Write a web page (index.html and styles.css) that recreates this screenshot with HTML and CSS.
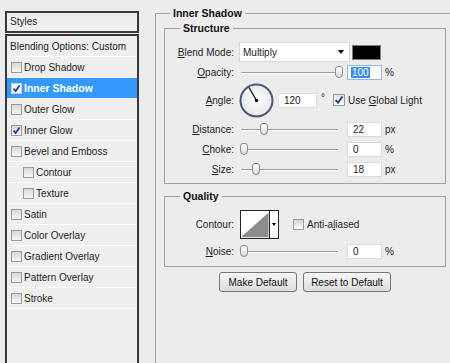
FILE: index.html
```html
<!DOCTYPE html>
<html lang="en">
<head>
<meta charset="UTF-8">
<title>Layer Style</title>
<link rel="stylesheet" href="styles.css">
</head>
<body>
<div class="dialog">
	<div class="styles-col">
		<div class="styles-head">Styles</div>
		<ul class="styles-list">
			<li class="row plain">Blending Options: Custom</li>
			<li class="row"><span class="check"></span>Drop Shadow</li>
			<li class="row selected"><span class="check on"><svg viewBox="0 0 9 9"><path d="M1.5 4.5 L3.6 7 L7.6 1.4"/></svg></span>Inner Shadow</li>
			<li class="row"><span class="check"></span>Outer Glow</li>
			<li class="row"><span class="check on"><svg viewBox="0 0 9 9"><path d="M1.5 4.5 L3.6 7 L7.6 1.4"/></svg></span>Inner Glow</li>
			<li class="row"><span class="check"></span>Bevel and Emboss</li>
			<li class="row sub"><span class="check"></span>Contour</li>
			<li class="row sub"><span class="check"></span>Texture</li>
			<li class="row"><span class="check"></span>Satin</li>
			<li class="row"><span class="check"></span>Color Overlay</li>
			<li class="row"><span class="check"></span>Gradient Overlay</li>
			<li class="row"><span class="check"></span>Pattern Overlay</li>
			<li class="row"><span class="check"></span>Stroke</li>
		</ul>
	</div>

	<fieldset class="effect">
		<legend>Inner Shadow</legend>

		<fieldset class="group structure">
			<legend>Structure</legend>
			<div class="field f-blend">
				<label class="lbl"><u>B</u>lend Mode:</label>
				<div class="select">Multiply<span class="arrow"></span></div>
				<span class="swatch"></span>
			</div>
			<div class="field f-opacity">
				<label class="lbl"><u>O</u>pacity:</label>
				<div class="slider"><span class="thumb" style="left:96px"></span></div>
				<span class="num focus"><span class="sel">100</span></span>
				<span class="unit">%</span>
			</div>
			<div class="field f-angle">
				<label class="lbl"><u>A</u>ngle:</label>
				<svg class="dial" width="35" height="35" viewBox="0 0 35 35">
					<defs>
						<radialGradient id="dialfill" cx="50%" cy="45%" r="55%">
							<stop offset="0" stop-color="#ffffff"/>
							<stop offset="1" stop-color="#e6e6e6"/>
						</radialGradient>
					</defs>
					<circle cx="17.5" cy="17.5" r="16" fill="url(#dialfill)" stroke="#4b5878" stroke-width="2"/>
					<line x1="17.5" y1="17.5" x2="10" y2="4.5" stroke="#111" stroke-width="1.3"/>
					<circle cx="17.5" cy="17.5" r="1.7" fill="#000"/>
				</svg>
				<span class="num wide">120</span>
				<span class="deg">°</span>
				<span class="check on big"><svg viewBox="0 0 9 9"><path d="M1.5 4.5 L3.6 7 L7.6 1.4"/></svg></span>
				<span class="chk-text">Use <u>G</u>lobal Light</span>
			</div>
			<div class="field f-slider">
				<label class="lbl"><u>D</u>istance:</label>
				<div class="slider"><span class="thumb" style="left:21px"></span></div>
				<span class="num">22</span>
				<span class="unit">px</span>
			</div>
			<div class="field f-slider">
				<label class="lbl"><u>C</u>hoke:</label>
				<div class="slider"><span class="thumb" style="left:1px"></span></div>
				<span class="num">0</span>
				<span class="unit">%</span>
			</div>
			<div class="field f-slider">
				<label class="lbl"><u>S</u>ize:</label>
				<div class="slider"><span class="thumb" style="left:13px"></span></div>
				<span class="num">18</span>
				<span class="unit">px</span>
			</div>
		</fieldset>

		<fieldset class="group quality">
			<legend>Quality</legend>
			<div class="field f-contour">
				<label class="lbl">Contour:</label>
				<div class="contour">
					<svg class="curve" width="30" height="27" viewBox="0 0 30 27">
						<rect width="30" height="27" fill="#fff"/>
						<polygon points="1,26 29,1 29,27 1,27" fill="#8c8c8c"/>
					</svg>
					<span class="contour-arrow"><span class="arrow"></span></span>
				</div>
				<span class="check"></span>
				<span class="chk-text">Anti-a<u>l</u>iased</span>
			</div>
			<div class="field f-slider f-noise">
				<label class="lbl"><u>N</u>oise:</label>
				<div class="slider"><span class="thumb" style="left:1px"></span></div>
				<span class="num">0</span>
				<span class="unit">%</span>
			</div>
		</fieldset>

		<div class="actions">
			<button class="btn">Make Default</button>
			<button class="btn wide">Reset to Default</button>
		</div>
	</fieldset>
</div>
</body>
</html>
```

FILE: styles.css
```css
html, body {
	margin: 0;
	padding: 0;
	overflow: hidden;
}
body {
	background: #ececec;
	font: 10px "Liberation Sans", Arial, sans-serif;
	color: #1d1d1d;
}
u {
	text-decoration: underline;
}

.dialog {
	display: flex;
	align-items: flex-start;
	box-sizing: border-box;
	padding: 6px 0 0 5px;
	height: 363px;
	overflow: hidden;
}

/* left list */
.styles-col {
	flex: none;
	width: 134px;
	margin-top: 5px;
}
.styles-head {
	height: 18px;
	line-height: 18px;
	padding-left: 3px;
	border: 2px solid #383838;
	background: #efefef;
}
.styles-list {
	list-style: none;
	margin: 1px 0 0;
	padding: 0;
	height: 340px;
	border: 2px solid #383838;
	background: #efefef;
}
.row {
	display: flex;
	align-items: center;
	height: 20px;
	padding-left: 4px;
	border-bottom: 1px solid #fbfbfb;
	white-space: nowrap;
}
.row.plain {
	padding-left: 3px;
}
.row.sub {
	padding-left: 16px;
}
.row.selected {
	background: #3399ff;
	color: #fff;
	font-weight: bold;
	font-size: 10.5px;
}

.check {
	flex: none;
	width: 9px;
	height: 9px;
	margin-right: 2px;
	border: 1px solid #9b9b9b;
	background: linear-gradient(#d6d6d6, #f9f9f9);
}
.check svg {
	display: block;
	width: 9px;
	height: 9px;
}
.check path {
	fill: none;
	stroke: #1f3c8c;
	stroke-width: 1.7;
}
.row.selected .check {
	background: #f4f4f4;
	border-color: #d0d0d0;
}

/* right side */
fieldset {
	margin: 0;
	min-width: 0;
	box-sizing: border-box;
	border: 1px solid #a2a2a2;
}
legend {
	font-weight: bold;
	font-size: 10.5px;
	line-height: 14px;
	padding: 0 3px;
	color: #111;
}
.effect {
	flex: none;
	margin-left: 16px;
	width: 300px;
	height: 400px;
	padding: 1px 0 0 8px;
}
.effect > legend {
	margin-left: 6px;
}
.group {
	width: 282px;
	padding: 6px 0 4px 0;
}
.group > legend {
	margin-left: 15px;
}
.quality {
	margin-top: 5px;
	padding-bottom: 5px;
}

.field {
	display: flex;
	align-items: center;
	height: 20px;
	white-space: nowrap;
}
.lbl {
	flex: none;
	width: 69px;
	margin-right: 5px;
	text-align: right;
}
.f-blend {
	height: 22px;
}
.f-opacity {
	height: 18px;
}
.f-angle {
	height: 38px;
}
.f-contour {
	height: 30px;
}
.f-noise {
	margin-top: 2px;
}

.select {
	flex: none;
	display: flex;
	align-items: center;
	box-sizing: border-box;
	width: 111px;
	height: 20px;
	padding-left: 3px;
	background: #fff;
	border: 1px solid #d8d8d8;
}
.arrow {
	width: 0;
	height: 0;
	border-top: 4px solid #000;
	border-left: 3.5px solid transparent;
	border-right: 3.5px solid transparent;
}
.select .arrow {
	margin-left: auto;
	margin-right: 5px;
}
.swatch {
	flex: none;
	box-sizing: border-box;
	width: 29px;
	height: 15px;
	margin-left: 2px;
	background: #000;
	border: 1px solid #7c7c7c;
}

.slider {
	flex: none;
	position: relative;
	width: 104px;
	height: 12px;
}
.slider::before {
	content: "";
	position: absolute;
	left: 2px;
	right: 5px;
	top: 6px;
	height: 1px;
	background: #9c9c9c;
	box-shadow: 0 1px 0 #fff;
}
.thumb {
	position: absolute;
	top: 0;
	box-sizing: border-box;
	width: 8px;
	height: 12px;
	border: 1px solid #8c8c8c;
	border-radius: 3px 3px 4px 4px;
	background: linear-gradient(#ffffff, #d9d9d9);
}

.num {
	flex: none;
	box-sizing: border-box;
	width: 35px;
	height: 15px;
	line-height: 13px;
	margin-left: 4px;
	padding-left: 5px;
	background: #fff;
	border: 1px solid #dcdcdc;
}
.num.wide {
	width: 39px;
	margin-left: 4px;
}
.num.focus {
	border-color: #8fb8e6;
	padding-left: 3px;
}
.sel {
	background: #3a8ee6;
	color: #fff;
	padding: 0 1px;
}
.unit {
	margin-left: 3px;
}
.deg {
	margin-left: 4px;
	align-self: flex-start;
	margin-top: 11px;
}
.dial {
	flex: none;
}
.f-angle .check {
	margin-left: 8px;
}
.check.big {
	width: 10px;
	height: 10px;
	background: linear-gradient(#e4e4e4, #fbfbfb);
}
.check.big svg {
	width: 10px;
	height: 10px;
}
.chk-text {
	margin-left: 1px;
}

.contour {
	flex: none;
	display: flex;
	box-sizing: border-box;
	width: 39px;
	height: 29px;
	margin-left: 1px;
	border: 1px solid #222;
	background: #fff;
}
.curve {
	display: block;
}
.contour-arrow {
	display: flex;
	align-items: center;
	justify-content: center;
	width: 8px;
	border-left: 1px solid #222;
	background: #fff;
}
.contour-arrow .arrow {
	border-top-width: 3px;
	border-left-width: 2.5px;
	border-right-width: 2.5px;
}
.f-contour .check {
	margin-left: 14px;
}

.actions {
	display: flex;
	justify-content: center;
	gap: 6px;
	width: 282px;
	margin-top: 5px;
}
.btn {
	box-sizing: border-box;
	width: 78px;
	height: 20px;
	padding: 0;
	font: inherit;
	color: #111;
	border: 1px solid #767676;
	border-radius: 3px;
	background: linear-gradient(#f7f7f7, #dcdcdc);
}
.btn.wide {
	width: 88px;
}
```
